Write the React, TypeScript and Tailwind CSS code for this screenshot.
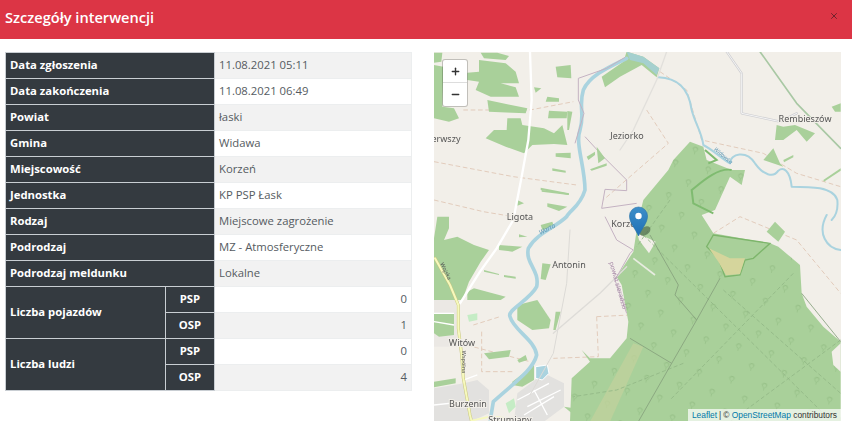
import React from 'react';
import { Plus, Minus, X } from 'lucide-react';

type Row = { label: string; value: string };

const rows: Row[] = [
  { label: 'Data zgłoszenia', value: '11.08.2021 05:11' },
  { label: 'Data zakończenia', value: '11.08.2021 06:49' },
  { label: 'Powiat', value: 'łaski' },
  { label: 'Gmina', value: 'Widawa' },
  { label: 'Miejscowość', value: 'Korzeń' },
  { label: 'Jednostka', value: 'KP PSP Łask' },
  { label: 'Rodzaj', value: 'Miejscowe zagrożenie' },
  { label: 'Podrodzaj', value: 'MZ - Atmosferyczne' },
  { label: 'Podrodzaj meldunku', value: 'Lokalne' },
];

const th = 'h-[26px] border border-[#c9ced3] bg-[#343a40] px-[4px] py-0 text-left font-bold text-white';
const thCenter = 'h-[26px] border border-[#c9ced3] bg-[#343a40] px-[4px] py-0 text-center font-bold text-white';
const tdGray = 'h-[26px] border border-[#eceeef] bg-[#f2f2f2] px-[4px] py-0 text-[#555b61]';
const tdWhite = 'h-[26px] border border-[#eceeef] bg-white px-[4px] py-0 text-[#555b61]';

const green = '#a9d09a';
const forestPoints =
  '640,600 715,510 730,480 780,425 820,440 830,480 905,510 945,510 935,555 900,530 855,630 815,645 850,700 1020,730 1045,740 1110,795 1115,880 1130,920 1180,980 1232,1025 1232,1265 420,1265 425,1135 480,1085 455,1050 480,1075 540,1075 590,1015 595,965 575,855 560,830 610,755 625,660';

// all coordinates below are in a 3x grid, offset per map area
const MapDrawing = () => (
  <svg viewBox="0 0 407 369" className="block h-full w-full blur-[0.4px]">
    <defs>
      <pattern id="trees" width="100" height="100" patternUnits="userSpaceOnUse" patternTransform="rotate(12)">
        <g fill="none" stroke="#90ba82" strokeWidth="1.6">
          <path d="M14 22a7 7 0 1 1 8 8v8M22 30a7 7 0 1 1 8-8" />
          <path d="M64 72a7 7 0 1 1 8 8v8M72 80a7 7 0 1 1 8-8" />
        </g>
      </pattern>
      <linearGradient id="pin" x1="0" y1="0" x2="0" y2="1">
        <stop offset="0" stopColor="#3d8fc9" />
        <stop offset="1" stopColor="#1f6fb5" />
      </linearGradient>
    </defs>
    <rect width="407" height="369" fill="#f2efe9" />
    <g transform="translate(-4 -52) scale(0.33333)">
      {/* built up */}
      <g fill="#e2e1df">
        <polygon points="12,900 78,900 82,1040 12,1040" fill="#ebe8e4" />
        <polygon points="12,1165 102,1150 142,1140 177,1170 177,1240 122,1265 12,1265" />
        <polygon points="262,1180 342,1120 402,1150 402,1220 342,1265 252,1265" />
      </g>

      {/* farm tracks */}
      <g fill="none" stroke="#dfc4b2" strokeWidth="2.5" strokeDasharray="14 8">
        <path d="M690 215L770 270L815 420L1000 460L1100 520L1232 560" />
        <path d="M650 330L715 430L600 530L520 600" />
        <path d="M100 330L300 330L430 305" />
        <path d="M12 485L250 530L440 555" />
        <path d="M12 600L160 635L250 650" />
        <path d="M500 950L600 945M500 950L505 1070L370 1075" />
        <path d="M155 995L155 1115L250 1115" />
        <path d="M850 700L930 650L1100 720L1232 880" />
        <path d="M130 975L210 950M90 1030L300 1085" />
      </g>

      {/* fields and woods, west */}
      <g transform="translate(12 150)" fill={green}>
        <polygon points="140,8 190,8 225,18 215,30 150,25" />
        <polygon points="135,30 215,40 245,65 255,100 200,100 245,112 255,140 170,140 125,120 135,95 100,90 100,68 135,65" />
        <polygon points="160,150 280,175 275,190 165,185" />
        <polygon points="0,8 25,8 22,35 0,38" />
        <polygon points="0,45 28,50 25,170 60,175 75,205 45,215 0,205" />
        <polygon points="220,205 260,205 265,225 330,235 360,250 385,225 400,285 360,282 295,285 270,310 215,290 155,265 180,240 218,240" />
        <polygon points="345,182 400,185 398,205 342,205" />
        <polygon points="400,183 415,185 405,240 400,240" />
        <polygon points="300,112 322,115 305,128" />
        <polygon points="340,140 375,145 375,155 335,155" />
        <polygon points="365,310 410,308 410,325 365,320" />
        <polygon points="365,50 410,45 412,85 370,82" />
        <polygon points="355,355 395,362 395,368 355,362" />
      </g>
      <g transform="translate(12 525)" fill={green}>
        <polygon points="0,190 10,125 45,125 45,160 30,195 70,185 120,210 165,225 140,260 105,320 85,375 0,375" />
        <polygon points="195,210 265,215 235,230 195,225" />
        <polygon points="340,85 400,95 375,108 340,95" />
        <polygon points="320,38 405,55 405,60 320,45" />
        <polygon points="320,150 355,140 360,155 325,165" />
        <polygon points="325,265 350,268 335,315 320,312" />
        <polygon points="250,75 270,85 250,92" />
        <polygon points="255,178 280,185 255,187" />
        <polygon points="150,285 195,297 195,300 150,290" />
        <polygon points="210,300 245,305 245,311 210,306" />
        <polygon points="100,350 120,340 215,365 200,375 100,375" />
      </g>
      <g transform="translate(12 900)">
        <g fill={green}>
          <polygon points="250,15 310,0 350,60 345,85 295,90 250,60" />
          <polygon points="0,40 60,40 60,105 15,110 0,100" />
          <polygon points="150,160 230,150 225,170 165,178" />
          <polygon points="250,180 275,165 280,180 255,188" />
          <polygon points="235,245 300,195 300,240 265,260 235,255" />
          <polygon points="0,245 65,235 65,250 0,262" />
          <polygon points="390,320 420,325 420,345" />
          <polygon points="365,35 380,35 365,90 358,90" />
        </g>
        <polygon points="215,310 240,295 245,320 225,340" fill="#c5ecc5" />
        <polygon points="100,45 130,40 130,60 105,65" fill="#c5ecc5" />
        <polygon points="305,200 340,195 345,220 325,240 305,235" fill="#aad3df" stroke="#fff" strokeWidth="3" />
        <g fill="none" stroke="#fff" strokeWidth="4">
          <path d="M0 315L95 305M90 240L130 225M250 300L345 250M280 320L380 270M270 345L360 290M300 270L340 345M0 40L60 40M0 65L60 75" />
        </g>
      </g>

      {/* main forest */}
      <g>
        <polygon fill={green} points={forestPoints} />
        <polygon fill="url(#trees)" points={forestPoints} />
        <polygon points="1232,1030 1205,1055 1210,1095 1232,1115" fill="#f2efe9" />
        <polygon points="622,700 677,725 657,760 627,720" fill="#f2efe9" />
        <polygon points="480,1265 610,1030 640,1040 540,1265" fill="#c2d29c" opacity="0.75" />
        <polygon points="1010,695 1035,665 1065,695 1045,725" fill={green} />
        <polygon points="830,740 850,705 1020,730 970,775 945,780 930,825 885,830 865,775" fill={green} stroke="#7db56b" strokeWidth="4" />
        <polygon points="837,745 900,775 945,775 930,822 888,826 865,785" fill="#d5d59c" />
        {/* rides and compartment lines */}
        <g fill="none" stroke="#91b786" strokeWidth="2.5" strokeDasharray="12 7">
          <path d="M640 705L1180 1240M880 870L1232 1180M1090 820L720 1200M1232 1020L900 1265M720 600L620 740M760 1090L560 1170L430 1190" />
        </g>
        <g fill="none" stroke="#86a07c" strokeWidth="2.5">
          <path d="M660 705L745 855L735 885L800 960L725 1090L625 1265" />
          <path d="M800 960L870 835" />
          <path d="M600 1015L725 1090" />
          <path d="M1115 880L1232 1025" />
        </g>
        <g fill="none" stroke="#7fbb70" strokeWidth="6">
          <path d="M825 450L860 480L835 490" />
          <path d="M905 510C860 500 800 560 785 570L790 610L850 640" />
        </g>
        <path d="M610 775L675 825" stroke="#e8ece0" strokeWidth="5" />
      </g>

      {/* water */}
      <polygon points="590,155 640,170 688,205 680,232 635,195 570,230 525,262 515,230 580,185" fill={green} />
      <polygon points="590,155 640,170 688,205 680,225 640,190 600,180" fill="#a5d0cf" />
      <g fill="none" stroke="#aad3df" strokeLinecap="round" strokeLinejoin="round">
        <path
          strokeWidth="11"
          d="M590 175C540 200 480 225 460 270C445 320 465 340 450 390C435 430 465 500 465 570C450 620 420 630 410 650C380 680 320 700 295 745C285 790 330 810 320 860C300 900 230 930 240 950C250 990 315 1020 320 1065C310 1110 250 1150 190 1205L180 1265"
        />
        <path
          strokeWidth="6"
          d="M685 232C740 235 775 260 785 330C795 370 815 395 820 435C850 450 880 480 900 490C900 460 950 450 975 490C1000 525 1030 535 1045 512C1060 500 1080 510 1085 560C1140 560 1210 560 1222 600C1225 630 1215 650 1205 660"
        />
        <path strokeWidth="6" d="M1232 750C1190 745 1160 700 1190 645" />
      </g>

      {/* roads */}
      <g fill="none" strokeLinecap="round" strokeLinejoin="round">
        <path d="M300 155L305 300L295 420L275 530L250 660L200 745L150 815L90 910" stroke="#fff" strokeWidth="7" />
        <path d="M15 775L60 855L85 915L85 985L95 1065L100 1135L120 1245L125 1265" stroke="#c9c67f" strokeWidth="9" />
        <path d="M15 775L60 855L85 915L85 985L95 1065L100 1135L120 1245L125 1265" stroke="#f6f9bd" strokeWidth="6" />
        <path d="M125 1262L180 1250L300 1260" stroke="#f6f9bd" strokeWidth="5" />
        <path d="M890 155L935 220L935 340L1050 365L1100 340" stroke="#cfcfd2" strokeWidth="7" />
        <path d="M890 155L935 220L935 340L1050 365L1100 340" stroke="#f4f4f4" strokeWidth="3" />
        <path d="M990 155L1100 310L1232 445" stroke="#a9c8a4" strokeWidth="5" />
        <path d="M710 155L680 240L610 390L570 450" stroke="#e2e0dc" strokeWidth="4" />
        <path d="M420 690L410 850L370 1060L300 1185" stroke="#dcdad6" strokeWidth="3" />
        <path d="M370 1000L510 880L590 800" stroke="#dedcd8" strokeWidth="4" />
      </g>

      {/* administrative line */}
      <g fill="none" stroke="#c4b2c2" strokeWidth="3" strokeLinejoin="round">
        <path d="M585 172L530 205L445 235L445 300L462 340L435 430" />
        <path d="M465 410L520 470L590 540L590 572L525 568L515 625L620 610" />
        <path d="M525 650L560 720L610 750L600 760L555 840L590 940" />
      </g>

      {/* small woods around the village */}
      <g fill={green}>
        <polygon points="335,570 415,580 415,585 335,575" />
        <polygon points="470,470 495,455 495,465 475,480" />
        <polygon points="500,440 525,475 505,490" />
        <polygon points="480,508 530,490 530,497 485,512" />
        <polygon points="1040,375 1060,380 1095,375 1155,400 1130,425 1100,390 1060,420 1035,420" />
        <polygon points="1030,445 1050,490 1060,500 1000,480" />
        <polygon points="1060,480 1090,465 1090,472 1062,487" />
        <polygon points="1180,540 1232,505 1232,512 1182,545" />
        <polygon points="1205,320 1232,310 1232,335 1215,335" />
      </g>
    </g>

    {/* labels */}
    <g fill="#555" stroke="#f2efe9" strokeWidth="2" paintOrder="stroke" fontSize="9" textAnchor="middle" className="font-['Noto_Sans',sans-serif]">
      <text x="193" y="87">Jeziorko</text>
      <text x="371" y="70">Rembieszów</text>
      <text x="12" y="90">erwszy</text>
      <text x="86" y="168">Ligota</text>
      <text x="135" y="216">Antonin</text>
      <text x="192" y="175">Korzeń</text>
      <text x="28" y="294">Witów</text>
      <text x="34" y="355">Burzenin</text>
      <text x="76" y="371">Strumiany</text>
    </g>
    <text x="0" y="0" fontSize="6.5" fill="#5c97b5" fontStyle="italic" textAnchor="middle" transform="translate(114 179) rotate(-27)" className="font-['Noto_Sans',sans-serif]">Warta</text>
    <text x="0" y="0" fontSize="5.5" fill="#5c97b5" fontStyle="italic" textAnchor="middle" transform="translate(288 105) rotate(40)" className="font-['Noto_Sans',sans-serif]">Widawka</text>
    <text x="0" y="0" fontSize="6.5" fill="#a88aa8" textAnchor="middle" transform="translate(182 234) rotate(74)" className="font-['Noto_Sans',sans-serif]">powiat sieradzki</text>
    <text x="0" y="0" fontSize="5.5" fill="#555" textAnchor="middle" transform="translate(10 220) rotate(64)" className="font-['Noto_Sans',sans-serif]">Wojska</text>
    <text x="0" y="0" fontSize="5.5" fill="#555" textAnchor="middle" transform="translate(28 310) rotate(90)" className="font-['Noto_Sans',sans-serif]">Wspólna</text>

    {/* marker */}
    <ellipse cx="211" cy="179" rx="6" ry="4" fill="#38503a" opacity="0.55" transform="rotate(-35 211 179)" />
    <path d="M204.5 184C201 176 195.5 171 195.5 164a9 9 0 0 1 18 0C213.5 171 208 176 204.5 184Z" fill="url(#pin)" stroke="#2570a8" strokeWidth="0.6" />
    <circle cx="204.5" cy="164" r="3.2" fill="#fff" />
  </svg>
);

export default function App() {
  return (
    <div className="h-[431px] w-[852px] overflow-hidden bg-white font-['Open_Sans',sans-serif]">
      <header className="flex h-[39px] items-center justify-between bg-[#dc3545] pb-[5px] pl-[5px] pr-[13px]">
        <h1 className="text-[14.6px] font-semibold leading-none text-white">Szczegóły interwencji</h1>
        <button className="mb-[3px] text-[#5e1f28]">
          <X className="h-[10px] w-[10px]" strokeWidth={2} />
        </button>
      </header>

      <div className="flex items-start pl-[5px] pt-[13px]">
        <table className="w-[406px] table-fixed border-collapse text-[11.3px]">
          <colgroup>
            <col className="w-[160px]" />
            <col className="w-[49px]" />
            <col className="w-[197px]" />
          </colgroup>
          <tbody>
            {rows.map((row, i) => (
              <tr key={row.label}>
                <th colSpan={2} className={th}>{row.label}</th>
                <td className={i % 2 === 0 ? tdGray : tdWhite}>{row.value}</td>
              </tr>
            ))}
            <tr>
              <th rowSpan={2} className={th}>Liczba pojazdów</th>
              <th className={thCenter}>PSP</th>
              <td className={`${tdWhite} text-right`}>0</td>
            </tr>
            <tr>
              <th className={thCenter}>OSP</th>
              <td className={`${tdGray} text-right`}>1</td>
            </tr>
            <tr>
              <th rowSpan={2} className={th}>Liczba ludzi</th>
              <th className={thCenter}>PSP</th>
              <td className={`${tdWhite} text-right`}>0</td>
            </tr>
            <tr>
              <th className={thCenter}>OSP</th>
              <td className={`${tdGray} text-right`}>4</td>
            </tr>
          </tbody>
        </table>

        <div className="relative ml-[22px] h-[369px] w-[407px] overflow-hidden">
          <MapDrawing />
          <div className="absolute left-[9px] top-[8px] flex w-[24px] flex-col rounded-[2px] bg-white text-[#333] shadow-[0_0_0_1px_rgba(0,0,0,0.2)]">
            <span className="flex h-[23px] items-center justify-center border-b border-[#ddd]">
              <Plus className="h-[11px] w-[11px]" strokeWidth={3} />
            </span>
            <span className="flex h-[23px] items-center justify-center">
              <Minus className="h-[11px] w-[11px]" strokeWidth={3} />
            </span>
          </div>
          <div className="absolute bottom-0 right-0 flex h-[12px] items-center whitespace-nowrap bg-white/70 px-[4px] font-['Liberation_Sans',sans-serif] text-[8.4px] text-[#333]">
            <span className="text-[#0078a8]">Leaflet</span>
            <span className="mx-[2px]">|</span>
            <span>©&nbsp;</span>
            <span className="text-[#0078a8]">OpenStreetMap</span>
            <span>&nbsp;contributors</span>
          </div>
        </div>
      </div>
    </div>
  );
}
